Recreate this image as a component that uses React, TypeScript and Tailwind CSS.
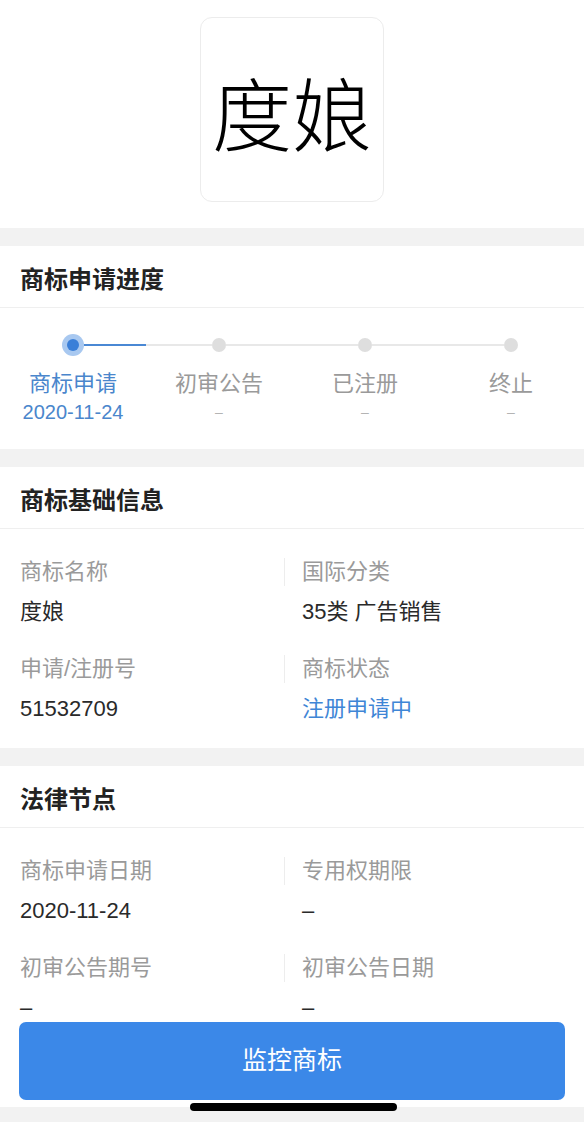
import React from 'react';

type Step = { name: string; date: string; active?: boolean };

const steps: Step[] = [
  { name: '商标申请', date: '2020-11-24', active: true },
  { name: '初审公告', date: '–' },
  { name: '已注册', date: '–' },
  { name: '终止', date: '–' },
];

type Field = { label: string; value: string; blue?: boolean };

const basicInfo: Field[][] = [
  [
    { label: '商标名称', value: '度娘' },
    { label: '国际分类', value: '35类 广告销售' },
  ],
  [
    { label: '申请/注册号', value: '51532709' },
    { label: '商标状态', value: '注册申请中', blue: true },
  ],
];

const legalInfo: Field[][] = [
  [
    { label: '商标申请日期', value: '2020-11-24' },
    { label: '专用权期限', value: '–' },
  ],
  [
    { label: '初审公告期号', value: '–' },
    { label: '初审公告日期', value: '–' },
  ],
];

function Band() {
  return <div className="h-[18px] bg-[#f2f2f2]" />;
}

function SectionTitle({ title }: { title: string }) {
  return (
    <div className="h-[62px] pt-[6px] flex items-center px-5 border-b border-[#efefef]">
      <h2 className="text-[24px] font-bold text-[#222]">{title}</h2>
    </div>
  );
}

function FieldRows({ rows }: { rows: Field[][] }) {
  return (
    <div>
      {rows.map((row, i) => (
        <div key={i} className="grid grid-cols-[284px_1fr] pt-[29px]">
          <div className="pl-5">
            <div className="h-[28px] leading-[28px] text-[22px] text-[#9a9a9a]">{row[0].label}</div>
            <div className="mt-[12px] h-[28px] leading-[28px] text-[22px] text-[#2a2a2a]">{row[0].value}</div>
          </div>
          <div>
            <div className="h-[28px] leading-[28px] text-[22px] text-[#9a9a9a] border-l border-[#ededed] pl-[17px]">
              {row[1].label}
            </div>
            <div
              className={
                row[1].blue
                  ? 'mt-[12px] pl-[18px] h-[28px] leading-[28px] text-[22px] text-[#3f86d6]'
                  : 'mt-[12px] pl-[18px] h-[28px] leading-[28px] text-[22px] text-[#2a2a2a]'
              }
            >
              {row[1].value}
            </div>
          </div>
        </div>
      ))}
    </div>
  );
}

function Stepper() {
  return (
    <div className="grid grid-cols-4 pt-[26px] pb-[24px]">
      {steps.map((s, i) => (
        <div key={s.name} className="flex flex-col items-center">
          <div className="w-full h-[22px] flex items-center">
            <div className={i === 0 ? 'flex-1 h-[2px]' : 'flex-1 h-[2px] bg-[#e8e8e8]'} />
            {s.active ? (
              <div className="w-[22px] h-[22px] rounded-full bg-[#a8c8f0] flex items-center justify-center">
                <div className="w-[12px] h-[12px] rounded-full bg-[#3a7fd8]" />
              </div>
            ) : (
              <div className="w-[14px] h-[14px] rounded-full bg-[#dedede]" />
            )}
            <div
              className={
                i === 0
                  ? 'flex-1 h-[2px] bg-[#4a88d4]'
                  : i === steps.length - 1
                  ? 'flex-1 h-[2px]'
                  : 'flex-1 h-[2px] bg-[#e8e8e8]'
              }
            />
          </div>
          <div
            className={
              s.active
                ? 'mt-[13px] h-[30px] leading-[30px] text-[22px] text-[#4a86cc]'
                : 'mt-[13px] h-[30px] leading-[30px] text-[22px] text-[#9a9a9a]'
            }
          >
            {s.name}
          </div>
          <div
            className={
              s.active
                ? 'h-[26px] leading-[26px] text-[20px] text-[#4a86cc]'
                : 'h-[26px] leading-[26px] text-[14px] text-[#b4b4b4]'
            }
          >
            {s.date}
          </div>
        </div>
      ))}
    </div>
  );
}

export default function App() {
  return (
    <div className="relative w-[584px] h-[1122px] overflow-hidden bg-[#f2f2f2] font-['Liberation_Sans','Noto_Sans_CJK_SC',sans-serif]">
      {/* Trademark image */}
      <div className="bg-white pt-[17px] pb-[26px] flex justify-center">
        <div className="w-[184px] h-[185px] rounded-[12px] border border-[#ececec] flex items-center justify-center">
          <span className="text-[80px] leading-none text-black font-light font-['Noto_Sans_CJK_SC',sans-serif]">度娘</span>
        </div>
      </div>

      <Band />
      <section className="bg-white">
        <SectionTitle title="商标申请进度" />
        <Stepper />
      </section>

      <Band />
      <section className="bg-white pb-[25px]">
        <SectionTitle title="商标基础信息" />
        <FieldRows rows={basicInfo} />
      </section>

      <Band />
      <section className="bg-white h-[341px]">
        <SectionTitle title="法律节点" />
        <FieldRows rows={legalInfo} />
      </section>

      {/* Bottom action */}
      <button className="absolute left-[19px] top-[1022px] w-[546px] h-[78px] rounded-[7px] bg-[#3b88e8] text-white text-[25px] flex items-center justify-center">
        监控商标
      </button>
      <div className="absolute left-[190px] top-[1103px] w-[207px] h-[8px] rounded-full bg-black" />
    </div>
  );
}
